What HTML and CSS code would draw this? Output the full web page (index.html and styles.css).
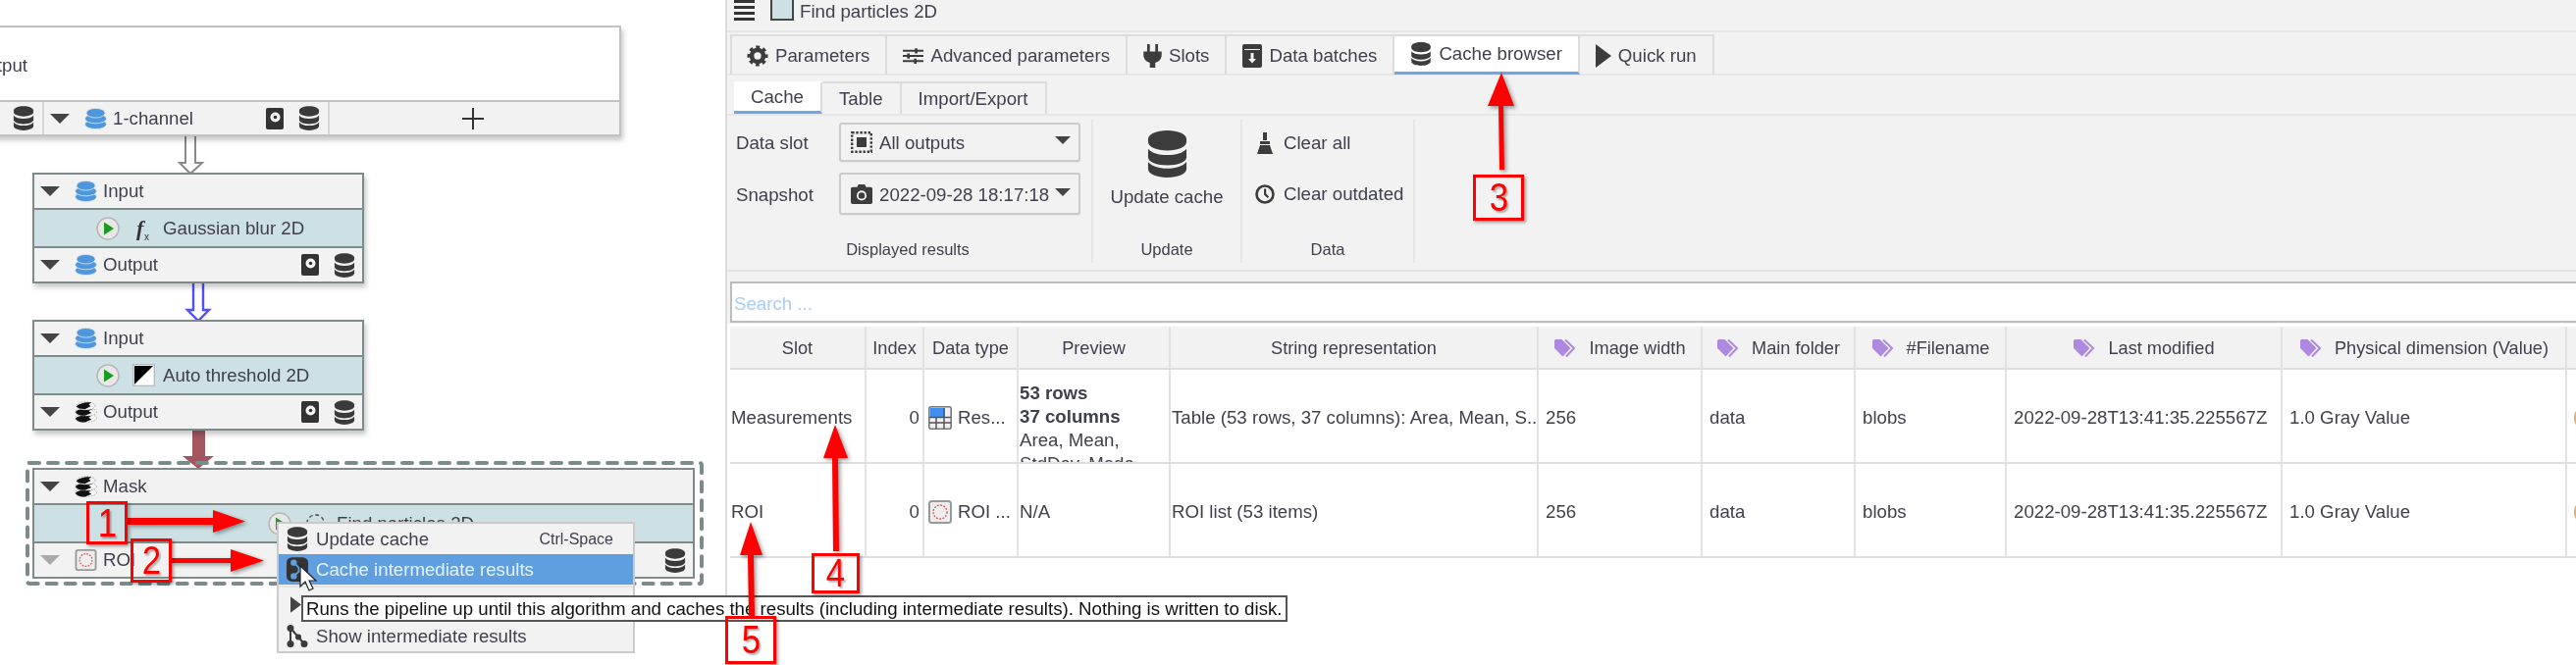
FILE: index.html
```html
<!DOCTYPE html>
<html lang="en">
<head>
<meta charset="utf-8">
<title>Find particles 2D - Cache browser</title>
<link rel="stylesheet" href="styles.css">
</head>
<body>
<svg class="defs" aria-hidden="true">
  <symbol id="db" viewBox="0 0 24 27"><path d="M1 5c0-3 5-5 11-5s11 2 11 5v1.500c0 3-5 5-11 5s-11-2-11-5z"/><path d="M1 10.500c2 2.500 6 3.500 11 3.500s9-1 11-3.500v5c0 2.500-5 4.500-11 4.500s-11-2-11-4.500z"/><path d="M1 18c2 2.500 6 3.800 11 3.800s9-1.300 11-3.800v4c0 3-5 5-11 5s-11-2-11-5z"/></symbol>
  <symbol id="layers" viewBox="0 0 24 22"><ellipse cx="12" cy="17" rx="11.500" ry="5" fill="#4f97dd" stroke="#e8eef2" stroke-width=".8"/><ellipse cx="12" cy="11" rx="11.500" ry="5" fill="#4f97dd" stroke="#e8eef2" stroke-width=".8"/><ellipse cx="12" cy="5" rx="10" ry="5" fill="#4f97dd" stroke="#e8eef2" stroke-width=".8"/></symbol>
  <symbol id="mask" viewBox="0 0 24 22"><ellipse cx="12" cy="17.500" rx="11.500" ry="4.300" fill="#f6f6f6" stroke="#999" stroke-width=".8" stroke-dasharray="1.500 1.500"/><path d="M1 18c2-3 11-4 17-3l-3 2 3 2-7 3c-4 0-9-1-10-4z" fill="#111"/><ellipse cx="12" cy="11" rx="11.500" ry="4.300" fill="#f6f6f6" stroke="#999" stroke-width=".8" stroke-dasharray="1.500 1.500"/><path d="M1 11c2-3 11-4 18-3l-4 2 3 2-7 3c-4 0-9-1-10-4z" fill="#111"/><ellipse cx="12" cy="4.500" rx="10" ry="4.300" fill="#f6f6f6" stroke="#999" stroke-width=".8" stroke-dasharray="1.500 1.500"/><path d="M2 5c2-3 10-5 16-4l-3 2 2 2-6 3c-4 0-8-1-9-3z" fill="#111"/></symbol>
  <symbol id="hdd" viewBox="0 0 18 22"><rect width="18" height="22" rx="2" fill="#333"/><circle cx="9.500" cy="9.500" r="5" fill="#f4f4f4"/><circle cx="9.500" cy="9.500" r="1.800" fill="#333"/></symbol>
  <symbol id="play" viewBox="0 0 24 24"><circle cx="12" cy="12" r="11" fill="#e8e8e8" stroke="#b6b6b6" stroke-width="1.500"/><path d="M8 5.500l10 6.500-10 6.500z" fill="#1a9c1f"/></symbol>
  <symbol id="threshold" viewBox="0 0 24 24"><rect x=".7" y=".7" width="22.600" height="22.600" fill="#fff" stroke="#bbb" stroke-width="1.400"/><path d="M2 2h20L2 22z" fill="#000"/></symbol>
  <symbol id="particle" viewBox="0 0 24 24"><circle cx="12" cy="12" r="9" fill="none" stroke="#555" stroke-width="1.600" stroke-dasharray="4 3"/></symbol>
  <symbol id="roi" viewBox="0 0 24 24"><rect x="1" y="1" width="22" height="22" rx="2.500" fill="#eee" stroke="#999" stroke-width="2"/><circle cx="12" cy="12" r="7" fill="none" stroke="#dc4b4b" stroke-width="1.300" stroke-dasharray="1.800 1.500"/></symbol>
  <symbol id="tableicon" viewBox="0 0 24 24"><rect x=".8" y=".8" width="22.400" height="22.400" rx="2" fill="#f0f0f0" stroke="#777" stroke-width="1.600"/><rect x="2" y="2" width="15" height="9" fill="#3f8ff0"/><path d="M1 11.500h22M1 17h22M8 11v12M16 2v21" stroke="#555" stroke-width="1.500"/></symbol>
  <symbol id="tag" viewBox="0 0 24 20"><path d="M12 1.500l9 8.500-8 8.500" fill="none" stroke="#ad8ae0" stroke-width="2"/><path d="M1 2.500q0-1.500 1.500-1.500h6l9 9-8 8.500-8.500-8.500z" fill="#ad8ae0"/></symbol>
  <symbol id="gear" viewBox="0 0 24 24"><circle cx="12" cy="12" r="6.500" fill="none" stroke="currentColor" stroke-width="5"/><circle cx="12" cy="12" r="9.500" fill="none" stroke="currentColor" stroke-width="4" stroke-dasharray="4 3.460" stroke-dashoffset="2"/></symbol>
  <symbol id="sliders" viewBox="0 0 24 20"><path d="M0 4h24M0 10h24M0 16h24" stroke="currentColor" stroke-width="2.400"/><path d="M14 1h3v6h-3zM5 7h3v6H5zM13 13h3v6h-3z"/></symbol>
  <symbol id="plug" viewBox="0 0 20 26"><path d="M4 0h3v8H4zM13 0h3v8h-3zM0 8h20v4c0 5-4 8-7 8.500V26H7v-5.500C4 20 0 17 0 12z"/></symbol>
  <symbol id="batches" viewBox="0 0 20 24"><path fill-rule="evenodd" d="M2 0h16a2 2 0 012 2v20a2 2 0 01-2 2H2a2 2 0 01-2-2V2a2 2 0 012-2zM2 5v1h16V5zM8.500 9v6H6l4 4.500 4-4.500h-2.500V9z"/></symbol>
  <symbol id="run" viewBox="0 0 16 24"><path d="M0 0l16 12L0 24z"/></symbol>
  <symbol id="alldots" viewBox="0 0 22 22"><rect x="1.200" y="1.200" width="19.600" height="19.600" fill="none" stroke="currentColor" stroke-width="2.400" stroke-dasharray="2.400 1.700"/><rect x="6" y="6" width="10" height="10"/></symbol>
  <symbol id="camera" viewBox="0 0 24 22"><path fill-rule="evenodd" d="M7 3l1.500-3h7L17 3h5a2 2 0 012 2v15a2 2 0 01-2 2H2a2 2 0 01-2-2V5a2 2 0 012-2zM12 7a5.500 5.500 0 100 11 5.500 5.500 0 000-11zM12 9a3.500 3.500 0 110 7 3.500 3.500 0 010-7z"/></symbol>
  <symbol id="broom" viewBox="0 0 16 22"><path d="M6 0h4v8H6zM3 9h10v3H3zM3 13h10l3 9H0z"/></symbol>
  <symbol id="clock" viewBox="0 0 20 20"><circle cx="10" cy="10" r="8.500" fill="none" stroke="currentColor" stroke-width="2.600"/><path d="M9 4.500h2.200v5l3 3-1.500 1.500L9 10.500z"/></symbol>
  <symbol id="hamburger" viewBox="0 0 21 21"><path d="M0 0h21v3H0zM0 6h21v3H0zM0 12h21v3H0zM0 18h21v3H0z"/></symbol>
  <symbol id="graph" viewBox="0 0 22 24"><path d="M4 4v16M4 4l9 10 5 6" fill="none" stroke="currentColor" stroke-width="2"/><circle cx="4" cy="4" r="3.500"/><circle cx="4" cy="20" r="3.500"/><circle cx="12" cy="13" r="3"/><circle cx="18" cy="20" r="3.500"/></symbol>
  <symbol id="dbgraph" viewBox="0 0 24 27"><rect width="24" height="27" rx="6" fill="#333"/><path d="M8 6l8 8-8 7" fill="none" stroke="#5c9ee0" stroke-width="2"/><circle cx="8" cy="6" r="3.500" fill="#5c9ee0"/><circle cx="16" cy="14" r="3.500" fill="#5c9ee0"/><circle cx="8" cy="21" r="3.500" fill="#5c9ee0"/></symbol>
</svg>

<div class="app">
  <section class="canvas">
    <svg class="edges" width="739" height="678" aria-hidden="true">
      <path d="M189 138v28h-6l11 11 12-11h-7v-28" fill="#fff" stroke="#8a8a8a" stroke-width="2"/>
      <path d="M197 288v28h-6l11 11 11-11h-6v-28" fill="#fff" stroke="#4f4fff" stroke-width="2.400"/>
      <path d="M196 438h13v27h9l-16 13-16-13h10z" fill="#a4565e"/>
      <rect class="selection" x="28" y="472" width="687" height="123" rx="2"/>
    </svg>

    <div class="node node-top">
      <div class="node-body"><span class="clipped-title">Output</span></div>
      <div class="slot-strip">
        <div class="strip-cell strip-first"><svg class="ic-db"><use href="#db"/></svg></div>
        <div class="strip-cell strip-mid">
          <i class="tri"></i><svg class="ic-layer"><use href="#layers"/></svg><span>1-channel</span>
          <span class="slot-actions"><svg class="ic-hdd"><use href="#hdd"/></svg><svg class="ic-db"><use href="#db"/></svg></span>
        </div>
        <div class="strip-cell strip-add"><span class="plus"></span></div>
      </div>
    </div>

    <div class="node node-blur">
      <div class="row"><i class="tri"></i><svg class="ic-layer"><use href="#layers"/></svg><span>Input</span></div>
      <div class="row alg"><svg class="ic-play"><use href="#play"/></svg><svg class="ic-fx" viewBox="0 0 15 26"><text x="0" y="20" class="fx-f">f</text><text x="8" y="25" class="fx-x">x</text></svg><span>Gaussian blur 2D</span></div>
      <div class="row"><i class="tri"></i><svg class="ic-layer"><use href="#layers"/></svg><span>Output</span>
        <span class="slot-actions"><svg class="ic-hdd"><use href="#hdd"/></svg><svg class="ic-db"><use href="#db"/></svg></span></div>
    </div>

    <div class="node node-thresh">
      <div class="row"><i class="tri"></i><svg class="ic-layer"><use href="#layers"/></svg><span>Input</span></div>
      <div class="row alg alg-tight"><svg class="ic-play"><use href="#play"/></svg><svg class="ic-thresh"><use href="#threshold"/></svg><span>Auto threshold 2D</span></div>
      <div class="row"><i class="tri"></i><svg class="ic-layer"><use href="#mask"/></svg><span>Output</span>
        <span class="slot-actions"><svg class="ic-hdd"><use href="#hdd"/></svg><svg class="ic-db"><use href="#db"/></svg></span></div>
    </div>

    <div class="node node-find">
      <div class="row"><i class="tri"></i><svg class="ic-layer"><use href="#mask"/></svg><span>Mask</span></div>
      <div class="row alg alg-find"><svg class="ic-play"><use href="#play"/></svg><svg class="ic-thresh"><use href="#particle"/></svg><span>Find particles 2D</span></div>
      <div class="row"><i class="tri tri-off"></i><svg class="ic-layer"><use href="#roi"/></svg><span>ROI</span>
        <span class="slot-actions"><svg class="ic-db"><use href="#db"/></svg></span></div>
    </div>
  </section>

  <main class="panel">
    <div class="panel-top">
      <header class="title-bar">
        <svg class="ic-burger"><use href="#hamburger"/></svg>
        <i class="swatch"></i>
        <span>Find particles 2D</span>
      </header>
      <nav class="tabs main-tabs">
        <a class="tab"><svg class="ic-tab"><use href="#gear"/></svg>Parameters</a>
        <a class="tab"><svg class="ic-tab ic-adv"><use href="#sliders"/></svg>Advanced parameters</a>
        <a class="tab"><svg class="ic-tab ic-plug"><use href="#plug"/></svg>Slots</a>
        <a class="tab"><svg class="ic-tab ic-batches"><use href="#batches"/></svg>Data batches</a>
        <a class="tab active"><svg class="ic-tab"><use href="#db"/></svg>Cache browser</a>
        <a class="tab"><svg class="ic-tab ic-run"><use href="#run"/></svg>Quick run</a>
      </nav>
      <nav class="tabs sub-tabs">
        <a class="tab active">Cache</a>
        <a class="tab">Table</a>
        <a class="tab">Import/Export</a>
      </nav>
      <div class="ribbon">
        <div class="band band-results">
          <div class="form-grid">
            <span>Data slot</span>
            <div class="combo combo-a"><svg class="ic-combo"><use href="#alldots"/></svg><span>All outputs</span><i class="tri tri-small"></i></div>
            <span>Snapshot</span>
            <div class="combo combo-b"><svg class="ic-combo"><use href="#camera"/></svg><span>2022-09-28 18:17:18</span><i class="tri tri-small"></i></div>
          </div>
          <div class="band-label">Displayed results</div>
        </div>
        <div class="band band-update">
          <svg class="ic-big"><use href="#db"/></svg>
          <span class="big-label">Update cache</span>
          <div class="band-label">Update</div>
        </div>
        <div class="band band-data">
          <div class="action"><span class="action-icon"><svg class="ic-broom"><use href="#broom"/></svg></span>Clear all</div>
          <div class="action"><span class="action-icon"><svg class="ic-clock"><use href="#clock"/></svg></span>Clear outdated</div>
          <div class="band-label">Data</div>
        </div>
      </div>
      <div class="search"><span>Search ...</span></div>
    </div>
    <div class="table-wrap">
      <table class="results">
        <colgroup>
          <col class="w-slot"><col class="w-index"><col class="w-type"><col class="w-preview"><col class="w-string">
          <col class="w-width"><col class="w-folder"><col class="w-file"><col class="w-mod"><col class="w-phys"><col class="w-last">
        </colgroup>
        <thead>
          <tr>
            <th>Slot</th><th>Index</th><th>Data type</th><th>Preview</th><th>String representation</th>
            <th><div class="th-tag"><svg class="ic-tag"><use href="#tag"/></svg>Image width</div></th>
            <th><div class="th-tag"><svg class="ic-tag"><use href="#tag"/></svg>Main folder</div></th>
            <th><div class="th-tag"><svg class="ic-tag"><use href="#tag"/></svg>#Filename</div></th>
            <th><div class="th-tag"><svg class="ic-tag"><use href="#tag"/></svg>Last modified</div></th>
            <th><div class="th-tag"><svg class="ic-tag"><use href="#tag"/></svg>Physical dimension (Value)</div></th>
            <th></th>
          </tr>
        </thead>
        <tbody>
          <tr>
            <td class="td-slot">Measurements</td>
            <td class="td-index">0</td>
            <td class="td-type"><div class="type-cell"><svg class="ic-type"><use href="#tableicon"/></svg>Res...</div></td>
            <td class="td-preview"><div class="preview-clip"><b>53 rows</b><br><b>37 columns</b><br>Area, Mean,<br>StdDev, Mode</div></td>
            <td class="td-string">Table (53 rows, 37 columns): Area, Mean, S...</td>
            <td>256</td><td>data</td><td>blobs</td><td>2022-09-28T13:41:35.225567Z</td><td>1.0 Gray Value</td>
            <td><i class="dot-cut"></i></td>
          </tr>
          <tr>
            <td class="td-slot">ROI</td>
            <td class="td-index">0</td>
            <td class="td-type"><div class="type-cell"><svg class="ic-type"><use href="#roi"/></svg>ROI ...</div></td>
            <td class="td-preview">N/A</td>
            <td class="td-string">ROI list (53 items)</td>
            <td>256</td><td>data</td><td>blobs</td><td>2022-09-28T13:41:35.225567Z</td><td>1.0 Gray Value</td>
            <td><i class="dot-cut"></i></td>
          </tr>
        </tbody>
      </table>
    </div>
  </main>

  <div class="menu">
    <div class="menu-row"><svg class="ic-menu"><use href="#db"/></svg><span>Update cache</span><span class="shortcut">Ctrl-Space</span></div>
    <div class="menu-row hot"><svg class="ic-menu"><use href="#dbgraph"/></svg><span>Cache intermediate results</span></div>
    <div class="menu-sep"></div>
    <div class="menu-row menu-run"><svg class="ic-menu-run"><use href="#run"/></svg></div>
    <div class="menu-row"><svg class="ic-menu"><use href="#graph"/></svg><span>Show intermediate results</span></div>
  </div>
  <div class="tooltip">Runs the pipeline up until this algorithm and caches the results (including intermediate results). Nothing is written to disk.</div>

  <svg class="annot" width="2625" height="678" aria-hidden="true">
    <path class="cursor" d="M306 577v21l5-5 4 9 4-2-4-8h7z"/>
    <g class="red">
      <path d="M130 528h87v-8l33 11.500-33 11.500v-8h-87z"/>
      <path d="M174 569h61v-9l34 11.500-34 11.500v-9h-61z"/>
      <path d="M1530 74l13 34h-11l1 65h-5l-1-65h-11z"/>
      <path d="M851 433l13 34h-10l1 95h-6l-1-95h-9z"/>
      <path d="M765 532l12 34h-9l1 62h-6l-1-62h-8z"/>
    </g>
  </svg>
  <div class="callout c1"><span>1</span></div>
  <div class="callout c2"><span>2</span></div>
  <div class="callout c3"><span>3</span></div>
  <div class="callout c4"><span>4</span></div>
  <div class="callout c5"><span>5</span></div>
</div>
</body>
</html>
```
FILE: styles.css
```css
* { box-sizing: border-box; }
html, body { margin: 0; padding: 0; background: #fff; }
body { width: 2625px; height: 678px; overflow: hidden; }
.defs { position: absolute; width: 0; height: 0; }
svg { display: block; flex: none; fill: currentColor; }

.app {
  position: relative;
  display: flex;
  width: 2625px;
  height: 678px;
  overflow: hidden;
  font: 18.67px/24px "Liberation Sans", Arial, sans-serif;
  color: #3f3f4d;
  filter: blur(0.45px);
}

/* ---------- graph canvas ---------- */
.canvas { position: relative; flex: none; width: 739px; height: 678px; background: #fff; overflow: hidden; }
.edges { position: absolute; left: 0; top: 0; }
.selection { fill: none; stroke: #7b8a8a; stroke-width: 4; stroke-dasharray: 10 9; stroke-linecap: round; }
.node {
  position: absolute;
  display: flex;
  flex-direction: column;
  border: 2px solid #7f8a8a;
  background: #f2f2f2;
  box-shadow: 2px 4px 5px rgba(0, 0, 0, .22);
}
.node-blur { left: 33px; top: 176px; width: 338px; }
.node-thresh { left: 33px; top: 326px; width: 338px; }
.node-find { left: 33px; top: 477px; width: 675px; box-shadow: none; }
.node-top { left: -60px; top: 26px; width: 693px; height: 113px; border-color: #c2c2c2; background: #fff; }
.node-body { height: 74px; padding: 27px 0 0 30px; }
.clipped-title { display: block; }
.slot-strip { display: flex; height: 35px; background: #f2f2f2; border-top: 2px solid #c2c2c2; }
.strip-cell { display: flex; align-items: center; height: 100%; border-right: 2px solid #d6d6d6; }
.strip-first { width: 103px; justify-content: flex-end; padding-right: 8px; }
.strip-mid { width: 291px; padding: 0 8px 0 6px; }
.strip-add { flex: 1; border-right: 0; justify-content: center; padding-right: 3px; }
.plus { position: relative; width: 22px; height: 22px; }
.plus::before, .plus::after { content: ""; position: absolute; background: #333; }
.plus::before { left: 0; right: 0; top: 10px; height: 2px; }
.plus::after { top: 0; bottom: 0; left: 10px; width: 2px; }

.row { display: flex; align-items: center; height: 34px; padding: 0 7px 0 6px; }
.alg { height: 41px; background: #cde0e4; border: 2px solid #7f8a8a; border-width: 2px 0; padding-left: 63px; }
.row .tri { margin-right: 15px; }
.strip-mid .tri { margin-right: 15px; }
.ic-layer { width: 23px; height: 22px; margin-right: 6px; }
.tri { flex: none; display: block; width: 0; height: 0; border: solid transparent; border-width: 10px 10px 0; border-top-color: #444; }
.tri-off { border-top-color: #aaa; }
.tri-small { margin-left: auto; margin-right: 8px; border-width: 8px 8px 0; margin-top: -4px; }
.slot-actions { display: flex; align-items: center; gap: 15px; margin-left: auto; color: #3a3a3a; }
.ic-db { width: 22px; height: 25px; color: #3a3a3a; }
.ic-hdd { width: 18px; height: 22px; }
.ic-play { width: 24px; height: 24px; margin-right: 17px; }
.ic-fx { width: 15px; height: 26px; margin-right: 12px; }
.fx-f { font: italic 700 22px "Liberation Serif", serif; fill: #333; }
.fx-x { font: 10px "Liberation Sans", sans-serif; fill: #333; }
.alg-tight .ic-play, .alg-find .ic-play { margin-right: 13px; }
.ic-thresh { width: 23px; height: 23px; margin-right: 8px; }
.alg-find { padding-left: 238px; }
.alg-find .ic-thresh { margin-right: 10px; }

/* ---------- right panel ---------- */
.panel { flex: none; width: 1886px; height: 678px; border-left: 2px solid #dcdcdc; background: #fff; }
.panel-top { background: #f2f2f2; padding-bottom: 0; height: 330px; }
.title-bar { display: flex; align-items: flex-start; height: 33px; padding-left: 7px; border-bottom: 2px solid #e6e6e6; overflow: hidden; }
.ic-burger { width: 21px; height: 21px; color: #333; margin-right: 16px; }
.swatch { display: block; width: 24px; height: 21px; background: #cde0e4; border: 2px solid #444; border-top: 0; margin-right: 6px; }

.tabs { display: flex; }
.tab { display: flex; align-items: center; gap: 7px; height: 100%; padding: 0 16px; border-right: 2px solid #dcdcdc; white-space: nowrap; }
.main-tabs { height: 42px; margin: 2px 0 0; padding-left: 3px; border-bottom: 2px solid #e6e6e6; }
.main-tabs .tab { border-top: 2px solid #dcdcdc; height: 41px; }
.main-tabs .tab:first-child { border-left: 2px solid #dcdcdc; padding-left: 15px; }
.tab.active { background: #fff; border-bottom: 3px solid #6ea6e6; }
.ic-tab { width: 22px; height: 24px; color: #3c3c3c; }
.ic-run { width: 16px; }
.ic-batches { width: 20px; }
.ic-adv { width: 21px; }
.ic-plug { width: 19px; }
.sub-tabs { height: 41px; padding: 6px 0 0 7px; border-bottom: 2px solid #e6e6e6; }
.sub-tabs .tab { border-top: 2px solid #dcdcdc; padding: 0 17px; }
.sub-tabs .tab.active { border-top-color: #fff; }

.ribbon { display: flex; height: 159px; padding: 4px 0 0 3px; border-bottom: 2px solid #e2e2e2; }
.band { display: flex; flex-direction: column; height: 146px; border-right: 2px solid #e6e6e6; }
.band-label { margin-top: auto; margin-bottom: 3px; text-align: center; font-size: 16.5px; line-height: 22px; }
.band-results { width: 370px; padding: 3px 12px 0 6px; }
.form-grid { display: grid; grid-template-columns: 105px 246px; grid-template-rows: 40px 43px; row-gap: 11px; align-items: center; }
.form-grid span { padding-top: 2px; }
.combo { display: flex; align-items: center; height: 100%; padding-left: 10px; background: #f2f2f2; border: 2px solid #cbcbcb; border-radius: 3px; box-shadow: 0 1px 1px rgba(0,0,0,.05); }
.ic-combo { width: 22px; height: 22px; margin-right: 7px; color: #3c3c3c; }
.band-update { width: 152px; align-items: center; padding-top: 11px; }
.ic-big { width: 43px; height: 48px; color: #3c3c3c; }
.big-label { margin-top: 8px; }
.band-update .band-label { width: 100%; }
.band-data { width: 176px; padding: 12px 0 0 13px; gap: 28px; }
.action { display: flex; align-items: center; gap: 9px; height: 24px; white-space: nowrap; }
.action-icon { display: flex; justify-content: center; width: 20px; }
.ic-broom { width: 16px; height: 22px; color: #3c3c3c; }
.ic-clock { width: 20px; height: 20px; color: #3c3c3c; }
.band-data .band-label { margin-top: auto; margin-right: 13px; }

.search { height: 42px; margin: 10px 0 0 3px; padding: 9px 3px 0 2px; background: #fff; border: 2px solid #bdbdbd; border-right: 0; color: #a9cdf2; }

.table-wrap { margin: 3px 0 0 3px; overflow: hidden; }
.results { table-layout: fixed; width: 1972px; border-collapse: separate; border-spacing: 0; }
.w-slot { width: 139px; } .w-index { width: 59px; } .w-type { width: 96px; } .w-preview { width: 155px; }
.w-string { width: 375px; } .w-width { width: 167px; } .w-folder { width: 156px; } .w-file { width: 154px; }
.w-mod { width: 281px; } .w-phys { width: 290px; } .w-last { width: 100px; }
.results th { height: 44px; padding: 2px 0 0; background: #f2f2f2; font-size: 18.2px; font-weight: 400; text-align: center; border-right: 2px solid #e2e2e2; border-bottom: 2px solid #dedede; white-space: nowrap; }
.results td { height: 96px; padding: 3px 0 0 7px; border-right: 2px solid #e2e2e2; border-bottom: 2px solid #dedede; white-space: nowrap; overflow: hidden; vertical-align: middle; }
.th-tag { display: flex; align-items: center; justify-content: center; gap: 12px; }
.ic-tag { width: 24px; height: 20px; }
.results .td-slot { padding-left: 1px; }
.results .td-index { padding: 3px 3px 0 0; text-align: right; }
.results .td-type { padding-left: 4px; }
.type-cell { display: flex; align-items: center; gap: 6px; }
.ic-type { width: 24px; height: 24px; }
.results .td-preview { padding-left: 1px; }
.preview-clip { height: 91px; padding-top: 9px; overflow: hidden; }
.results .td-string { padding-left: 1px; }
.dot-cut { display: block; width: 14px; height: 18px; background: #e8b070; border-radius: 7px; }

/* ---------- overlays ---------- */
.menu { position: absolute; left: 282px; top: 532px; width: 365px; height: 134px; background: #f2f2f2; border: 2px solid #cacaca; }
.menu-row { display: flex; align-items: center; height: 31px; padding-left: 8px; }
.ic-menu { width: 22px; height: 25px; margin-right: 8px; color: #3a3a3a; }
.menu-row.hot { background: #5f9fe0; color: #e9f2fb; }
.menu-sep { height: 2px; margin-top: 1px; background: #e4e4e4; }
.menu-run { height: 34px; padding-left: 12px; }
.ic-menu-run { width: 11px; height: 17px; color: #444; }
.shortcut { margin-left: auto; margin-right: 20px; font-size: 16px; }
.tooltip { position: absolute; left: 307px; top: 607px; width: 1005px; height: 27px; padding: 0 0 0 3px; background: #fff; border: 2px solid #555; color: #111; line-height: 23px; white-space: nowrap; }

.annot { position: absolute; left: 0; top: 0; }
.cursor { fill: #fff; stroke: #222; stroke-width: 1.200; }
.red { fill: #f00; filter: drop-shadow(2px 2px 2px rgba(0, 0, 0, .4)); }
.callout { position: absolute; display: flex; align-items: center; justify-content: center; border: 3px solid #f00; color: #f00; font-size: 41px; line-height: 1; box-shadow: 2px 2px 3px rgba(0, 0, 0, .35); text-shadow: 2px 2px 2px rgba(0, 0, 0, .3); }
.callout span { display: block; transform: scaleX(.85); }
.c1 { left: 88px; top: 511px; width: 42px; height: 44px; }
.c2 { left: 133px; top: 549px; width: 42px; height: 45px; }
.c3 { left: 1501px; top: 178px; width: 52px; height: 47px; }
.c4 { left: 827px; top: 564px; width: 49px; height: 41px; }
.c5 { left: 739px; top: 628px; width: 52px; height: 49px; }
```
